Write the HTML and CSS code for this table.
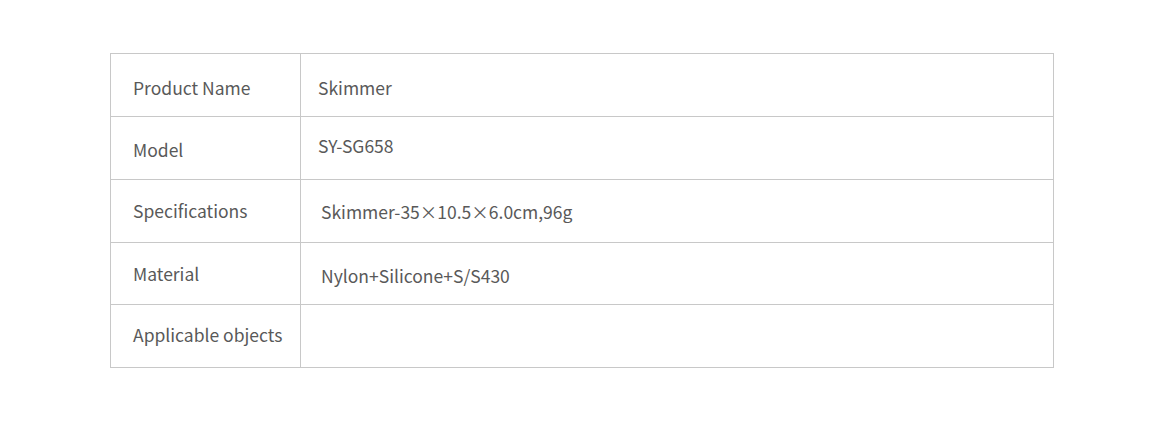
FILE: index.html
```html
<!DOCTYPE html>
<html>
<head>
<meta charset="utf-8">
<link rel="stylesheet" href="styles.css">
</head>
<body>
<div class="wrap">
  <table class="spec">
    <tr><td class="k p21">Product Name</td><td class="v p21">Skimmer</td></tr>
    <tr><td class="k p20">Model</td><td class="v p16">SY-SG658</td></tr>
    <tr><td class="k p18">Specifications</td><td class="v shift p19">Skimmer-35×10.5×6.0cm,96g</td></tr>
    <tr class="short"><td class="k p18">Material</td><td class="v shift p20">Nylon+Silicone+S/S430</td></tr>
    <tr><td class="k p17">Applicable objects</td><td class="v"></td></tr>
  </table>
</div>
</body>
</html>
```

FILE: styles.css
```css
html, body {
  margin: 0;
  padding: 0;
  background: #fff;
}
.wrap {
  padding: 53px 0 0 110px;
}
.spec {
  border-collapse: collapse;
  width: 944px;
  font-family: "Noto Sans CJK SC", "Noto Sans", sans-serif;
  font-size: 17.5px;
  line-height: 25px;
  color: #595959;
}
.spec td {
  border: 1px solid #c8c8c8;
  height: 63px;
  padding: 0;
  box-sizing: border-box;
  vertical-align: top;
}
.spec tr.short td { height: 62px; }
.spec .k {
  width: 190px;
  padding-left: 22px;
}
.spec .v {
  padding-left: 17px;
}
.spec .v.shift { padding-left: 20px; }
.spec .p16 { padding-top: 16px; }
.spec .p17 { padding-top: 17px; }
.spec .p18 { padding-top: 18px; }
.spec .p19 { padding-top: 19px; }
.spec .p20 { padding-top: 20px; }
.spec .p21 { padding-top: 21px; }
```
